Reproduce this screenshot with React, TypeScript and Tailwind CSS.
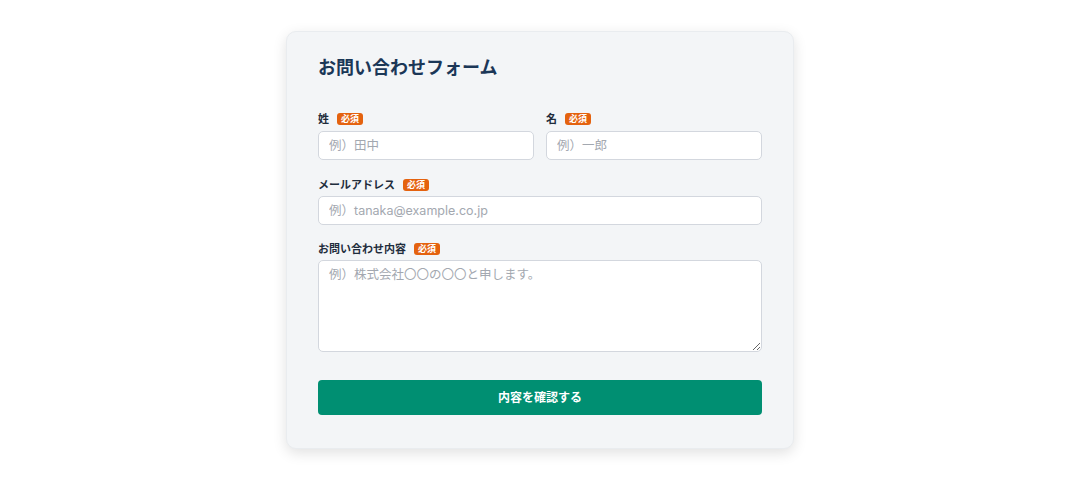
const Badge = () => (
  <span className="rounded-[3px] bg-[#e4620f] px-1 text-[9px] leading-[12px] font-bold text-white">必須</span>
);

const Label = ({ text }: { text: string }) => (
  <div className="flex items-center gap-2 h-4">
    <span className="text-[11px] font-bold text-[#1f2d3d]">{text}</span>
    <Badge />
  </div>
);

const inputCls =
  "w-full h-[29px] rounded-[5px] border border-[#d3d7de] bg-white px-[10px] text-[12.5px] text-gray-800 placeholder:text-[#a3a8b0] outline-none";

export default function App() {
  return (
    <div className="min-h-screen w-full bg-white flex justify-center pt-[31px]" style={{ fontFamily: 'Inter, "Noto Sans CJK JP", sans-serif' }}>
      <div className="w-[508px] h-[418px] rounded-[10px] border border-[#e9ecef] bg-[#f3f5f7] px-[31px] pt-[22px] shadow-[0_4px_14px_rgba(0,0,0,0.12)]">
        <h1 className="text-[18px] leading-7 font-bold text-[#1b3757]">お問い合わせフォーム</h1>

        <div className="mt-[29px] grid grid-cols-2 gap-3">
          <div className="flex flex-col gap-1">
            <Label text="姓" />
            <input className={inputCls} placeholder="例）田中" />
          </div>
          <div className="flex flex-col gap-1">
            <Label text="名" />
            <input className={inputCls} placeholder="例）一郎" />
          </div>
        </div>

        <div className="mt-[17px] flex flex-col gap-[3px]">
          <Label text="メールアドレス" />
          <input className={inputCls} placeholder="例）tanaka@example.co.jp" />
        </div>

        <div className="mt-[16px] flex flex-col gap-[3px]">
          <Label text="お問い合わせ内容" />
          <textarea
            className="w-full h-[92px] rounded-[5px] border border-[#d3d7de] bg-white px-[10px] py-[5px] text-[12.5px] text-gray-800 placeholder:text-[#a3a8b0] outline-none"
            placeholder="例）株式会社〇〇の〇〇と申します。"
          />
        </div>

        <button className="mt-[28px] w-full h-[35px] rounded-[4px] bg-[#008f72] text-[12px] font-bold text-white">
          内容を確認する
        </button>
      </div>
    </div>
  );
}
